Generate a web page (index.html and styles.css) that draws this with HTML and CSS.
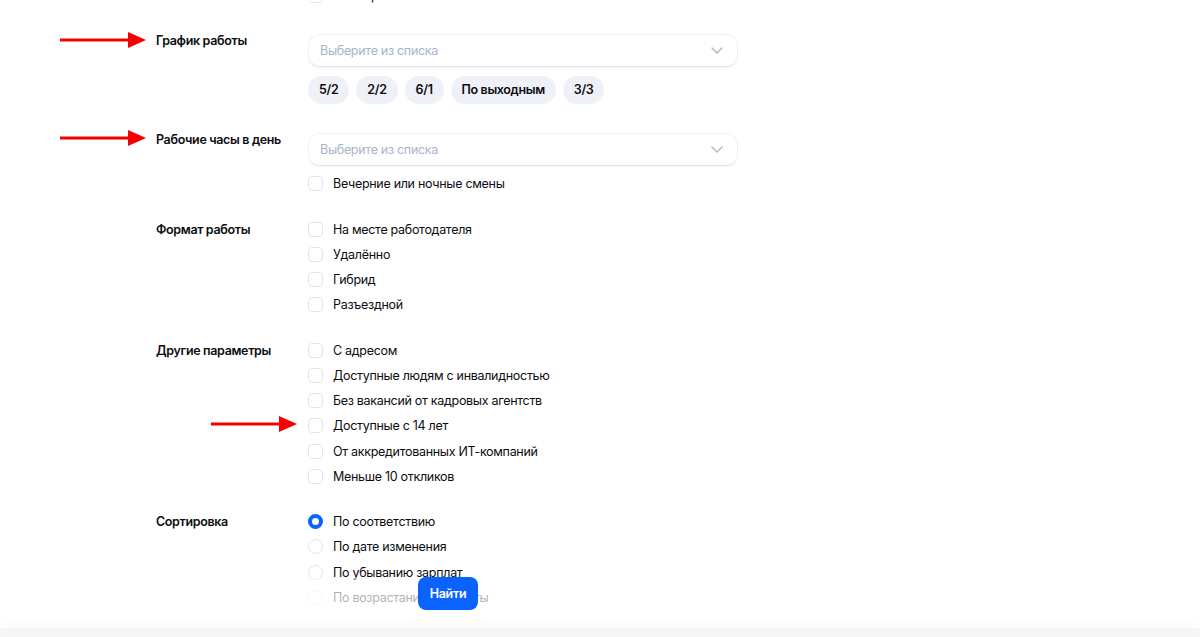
FILE: index.html
```html
<!DOCTYPE html>
<html lang="ru">
<head>
<meta charset="utf-8">
<title>Фильтры</title>
<link rel="stylesheet" href="styles.css">
</head>
<body>
<div class="page">
  <section class="group">
    <div class="label"></div>
    <div class="control">
      <label class="row"><span class="box"></span><span class="txt">Стажировка</span></label>
    </div>
  </section>

  <section class="group">
    <div class="label">График работы</div>
    <div class="control with-select">
      <div class="select"><span class="ph">Выберите из списка</span>
        <svg class="chev" width="12" height="7" viewBox="0 0 12 7"><path d="M1 1l5 5 5-5" fill="none" stroke="#a9b7ca" stroke-width="1.4" stroke-linecap="round" stroke-linejoin="round"/></svg>
      </div>
      <div class="chips">
        <span class="chip">5/2</span>
        <span class="chip">2/2</span>
        <span class="chip">6/1</span>
        <span class="chip">По выходным</span>
        <span class="chip">3/3</span>
      </div>
    </div>
  </section>

  <section class="group">
    <div class="label">Рабочие часы в день</div>
    <div class="control with-select">
      <div class="select"><span class="ph">Выберите из списка</span>
        <svg class="chev" width="12" height="7" viewBox="0 0 12 7"><path d="M1 1l5 5 5-5" fill="none" stroke="#a9b7ca" stroke-width="1.4" stroke-linecap="round" stroke-linejoin="round"/></svg>
      </div>
      <label class="row after-select"><span class="box"></span><span class="txt">Вечерние или ночные смены</span></label>
    </div>
  </section>

  <section class="group">
    <div class="label">Формат работы</div>
    <div class="control">
      <label class="row"><span class="box"></span><span class="txt">На месте работодателя</span></label>
      <label class="row"><span class="box"></span><span class="txt">Удалённо</span></label>
      <label class="row"><span class="box"></span><span class="txt">Гибрид</span></label>
      <label class="row"><span class="box"></span><span class="txt">Разъездной</span></label>
    </div>
  </section>

  <section class="group">
    <div class="label">Другие параметры</div>
    <div class="control">
      <label class="row"><span class="box"></span><span class="txt">С адресом</span></label>
      <label class="row"><span class="box"></span><span class="txt">Доступные людям с инвалидностью</span></label>
      <label class="row"><span class="box"></span><span class="txt">Без вакансий от кадровых агентств</span></label>
      <label class="row"><span class="box"></span><span class="txt">Доступные с 14 лет</span></label>
      <label class="row"><span class="box"></span><span class="txt">От аккредитованных ИТ-компаний</span></label>
      <label class="row"><span class="box"></span><span class="txt">Меньше 10 откликов</span></label>
    </div>
  </section>

  <section class="group">
    <div class="label">Сортировка</div>
    <div class="control">
      <label class="row"><span class="radio checked"></span><span class="txt">По соответствию</span></label>
      <label class="row"><span class="radio"></span><span class="txt">По дате изменения</span></label>
      <label class="row"><span class="radio"></span><span class="txt">По убыванию зарплат</span></label>
      <label class="row"><span class="radio"></span><span class="txt">По возрастанию зарплаты</span></label>
    </div>
  </section>
</div>

<svg class="arrow arrow-1" width="90" height="18" viewBox="0 0 90 18"><path d="M0 9h70" stroke="#f50000" stroke-width="3"/><path d="M68 1l18 8-18 8z" fill="#f50000"/></svg>
<svg class="arrow arrow-2" width="90" height="18" viewBox="0 0 90 18"><path d="M0 9h70" stroke="#f50000" stroke-width="3"/><path d="M68 1l18 8-18 8z" fill="#f50000"/></svg>
<svg class="arrow arrow-3" width="90" height="18" viewBox="0 0 90 18"><path d="M0 9h70" stroke="#f50000" stroke-width="3"/><path d="M68 1l18 8-18 8z" fill="#f50000"/></svg>

<div class="action-bar">
  <button class="btn">Найти</button>
</div>
<div class="next-strip"></div>
</body>
</html>
```

FILE: styles.css
```css
html, body {
  margin: 0;
  padding: 0;
  background: #ffffff;
  overflow: hidden;
}
body {
  font-family: Inter, "Noto Sans", "Liberation Sans", sans-serif;
  font-size: 12.5px;
  letter-spacing: -0.3px;
  color: #0c0d0f;
  height: 637px;
}
.page {
  margin-top: -17px;
  padding-left: 156px;
  display: flex;
  flex-direction: column;
  gap: 20px;
}
.group {
  display: grid;
  grid-template-columns: 152px 430px;
  align-items: start;
}
.label {
  font-weight: 600;
  line-height: 26px;
  font-size: 12.5px;
  letter-spacing: -0.35px;
}
.control {
  display: flex;
  flex-direction: column;
}
.control.with-select {
  padding-top: 6px;
}
.select {
  height: 33px;
  box-sizing: border-box;
  border: 1px solid #eef1f5;
  border-bottom-color: #e1e6ee;
  border-radius: 12px;
  box-shadow: 0 1px 2px rgba(40, 60, 90, 0.06);
  display: flex;
  align-items: center;
  justify-content: space-between;
  padding: 0 14px 0 11px;
}
.ph {
  color: #a6b5c9;
}
.chev { display: block; }
.chips {
  display: flex;
  gap: 7px;
  margin-top: 9px;
  padding-bottom: 3px;
}
.chip {
  height: 28px;
  line-height: 28px;
  padding: 0 11px;
  border-radius: 14px;
  background: #eef1f7;
  font-weight: 600;
  letter-spacing: -0.35px;
}
.row {
  display: flex;
  align-items: center;
  height: 25.25px;
}
.row.after-select { margin-top: 5px; }
.box {
  width: 15px;
  height: 15px;
  box-sizing: border-box;
  border: 1px solid #dfe5ee;
  border-radius: 4px;
  margin-right: 10px;
  flex: none;
}
.radio {
  width: 15px;
  height: 15px;
  box-sizing: border-box;
  border: 1px solid #dfe5ee;
  border-radius: 50%;
  margin-right: 10px;
  flex: none;
}
.radio.checked {
  border: 4px solid #0a63ff;
  background: #ffffff;
}
.txt {
  line-height: 25px;
}
.arrow {
  position: absolute;
  display: block;
}
.arrow-1 { left: 60px; top: 31px; }
.arrow-2 { left: 60px; top: 129px; }
.arrow-3 { left: 211px; top: 415px; }

.action-bar {
  position: fixed;
  left: 0;
  right: 0;
  bottom: 9px;
  height: 51px;
  background: linear-gradient(to bottom, rgba(255,255,255,0.3) 0, rgba(255,255,255,0.65) 12px, rgba(255,255,255,0.75) 100%);
  display: flex;
  align-items: flex-start;
  padding-left: 418px;
  box-sizing: border-box;
}
.btn {
  width: 60px;
  height: 33px;
  border: none;
  border-radius: 8px;
  background: #0a63ff;
  color: #ffffff;
  font-family: Inter, "Noto Sans", "Liberation Sans", sans-serif;
  font-weight: 600;
  font-size: 12.5px;
  letter-spacing: -0.3px;
  padding: 0;
}
.next-strip {
  position: fixed;
  left: 0;
  right: 0;
  bottom: 0;
  height: 9px;
  background: #f5f6f7;
  box-shadow: 0 -4px 8px rgba(0, 0, 0, 0.025);
}
```
